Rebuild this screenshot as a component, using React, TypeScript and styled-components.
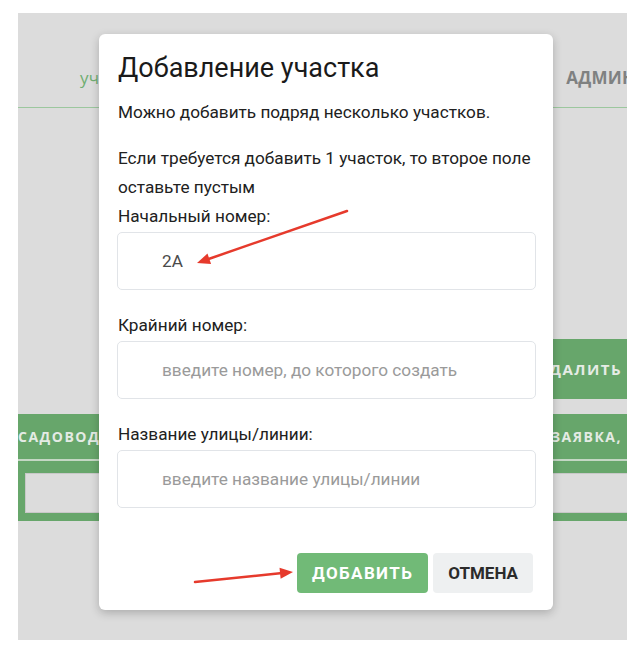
import * as React from "react";
import styled, { createGlobalStyle } from "styled-components";

const GlobalStyle = createGlobalStyle`
  html, body {
    margin: 0;
    padding: 0;
    background: #ffffff;
  }
  * {
    box-sizing: border-box;
  }
`;

const Page = styled.div`
  position: relative;
  width: 642px;
  height: 658px;
  padding: 13px 0 0 18px;
`;

const Screen = styled.div`
  position: relative;
  width: 609px;
  height: 627px;
  background: #dcdcdc;
  overflow: hidden;
  font-family: "Open Sans", "Liberation Sans", sans-serif;
`;

const Nav = styled.nav`
  display: flex;
  align-items: center;
  height: 95px;
  padding-top: 34px;
  border-bottom: 1px solid #9cc79e;
`;

const NavDivider = styled.span`
  width: 1px;
  height: 24px;
  margin-left: 28px;
  background: #cfcfcf;
`;

const NavItem = styled.span<{ $active?: boolean; $offset: number }>`
  margin-left: ${(p) => p.$offset}px;
  font-size: 17px;
  font-weight: ${(p) => (p.$active ? 400 : 700)};
  color: ${(p) => (p.$active ? "#6fae72" : "#7f8181")};
  white-space: nowrap;
  letter-spacing: 0.3px;
`;

const Toolbar = styled.div`
  display: flex;
  margin-top: 231px;
  padding-left: 506px;
`;

const GreenButton = styled.div`
  height: 60px;
  padding: 0 14px;
  display: flex;
  align-items: center;
  background: #67a66b;
  color: #e6ece6;
  font-weight: 700;
  font-size: 15px;
  letter-spacing: 1.5px;
  white-space: nowrap;
`;

const TableHeader = styled.div`
  display: flex;
  align-items: center;
  height: 47px;
  margin-top: 15px;
  background: #67a66b;
  border-bottom: 2px solid #c4d7c4;
  white-space: nowrap;
`;

const HeaderCell = styled.span<{ $width: number }>`
  flex: 0 0 ${(p) => p.$width}px;
  color: #e4ebe4;
  font-size: 14px;
  font-weight: 700;
  letter-spacing: 1.5px;
`;

const FilterRow = styled.div`
  height: 60px;
  padding: 12px 0 8px 7px;
  background: #67a66b;
`;

const FilterInput = styled.div`
  height: 40px;
  width: 640px;
  background: #dcdcdc;
  border: 1px solid #c8c8c8;
`;

const Modal = styled.div`
  position: absolute;
  left: 81px;
  top: 21px;
  width: 454px;
  padding: 17px 17px 17px 19px;
  background: #ffffff;
  border-radius: 6px;
  box-shadow: 0 3px 10px rgba(0, 0, 0, 0.22);
  font-family: Roboto, "Noto Sans", sans-serif;
  color: #212121;
`;

const Title = styled.h2`
  margin: 0 0 13px;
  font-size: 27px;
  line-height: 34px;
  font-weight: 400;
  color: #1a1a1a;
`;

const Text = styled.p<{ $gap: number }>`
  margin: 0 0 ${(p) => p.$gap}px;
  font-size: 17.2px;
  line-height: 29px;
`;

const Field = styled.div`
  margin-bottom: 23px;
`;

const Label = styled.label`
  display: block;
  font-size: 17.2px;
  line-height: 24px;
  margin-bottom: 4px;
`;

const Input = styled.input`
  display: block;
  width: 419px;
  height: 58px;
  margin-left: -1px;
  padding: 0 0 0 44px;
  border: 1px solid #e1e4e8;
  border-radius: 5px;
  font-family: Roboto, "Noto Sans", sans-serif;
  font-size: 17.2px;
  color: #4a4a4a;
  outline: none;

  &::placeholder {
    color: #9a9a9a;
  }
`;

const Footer = styled.div`
  display: flex;
  justify-content: flex-end;
  gap: 5px;
  margin-top: 45px;
  padding-right: 3px;
`;

const ModalButton = styled.button<{ $primary?: boolean }>`
  height: 40px;
  padding: 0 15px;
  border: 0;
  border-radius: 4px;
  background: ${(p) => (p.$primary ? "#71ba77" : "#eef0f1")};
  color: ${(p) => (p.$primary ? "#ffffff" : "#2b2b2b")};
  font-family: Roboto, "Noto Sans", sans-serif;
  font-size: 17px;
  font-weight: 700;
  letter-spacing: ${(p) => (p.$primary ? 1.4 : 0)}px;
  text-transform: uppercase;
`;

const Annotations = styled.svg`
  position: absolute;
  left: 0;
  top: 0;
  pointer-events: none;
`;

const Arrow = ({ x1, y1, x2, y2 }: { x1: number; y1: number; x2: number; y2: number }) => {
  const a = Math.atan2(y2 - y1, x2 - x1);
  const len = 13;
  const w = 5.5;
  const bx = x2 - Math.cos(a) * len;
  const by = y2 - Math.sin(a) * len;
  const px = -Math.sin(a) * w;
  const py = Math.cos(a) * w;
  return (
    <g>
      <line x1={x1} y1={y1} x2={bx} y2={by} stroke="#e63a2c" strokeWidth={2.5} strokeLinecap="round" />
      <polygon points={`${x2},${y2} ${bx + px},${by + py} ${bx - px},${by - py}`} fill="#e63a2c" />
    </g>
  );
};

export default function App() {
  return (
    <Page>
      <GlobalStyle />
      <Screen>
        <Nav>
          <NavDivider />
          <NavItem $active $offset={34}>участки</NavItem>
          <NavItem $offset={420}>АДМИНИСТРИРОВАНИЕ</NavItem>
        </Nav>
        <Toolbar>
          <GreenButton>УДАЛИТЬ</GreenButton>
        </Toolbar>
        <TableHeader>
          <HeaderCell $width={533}>САДОВОД</HeaderCell>
          <HeaderCell $width={200}>ЗАЯВКА, СТАТУС</HeaderCell>
        </TableHeader>
        <FilterRow>
          <FilterInput />
        </FilterRow>

        <Modal>
          <Title>Добавление участка</Title>
          <Text $gap={17}>Можно добавить подряд несколько участков.</Text>
          <Text $gap={2}>
            Если требуется добавить 1 участок, то второе поле оставьте пустым
          </Text>
          <Field>
            <Label>Начальный номер:</Label>
            <Input defaultValue="2А" />
          </Field>
          <Field>
            <Label>Крайний номер:</Label>
            <Input placeholder="введите номер, до которого создать" />
          </Field>
          <Field>
            <Label>Название улицы/линии:</Label>
            <Input placeholder="введите название улицы/линии" />
          </Field>
          <Footer>
            <ModalButton $primary>Добавить</ModalButton>
            <ModalButton>Отмена</ModalButton>
          </Footer>
        </Modal>
      </Screen>
      <Annotations width={642} height={658} viewBox="0 0 642 658">
        <Arrow x1={347} y1={211} x2={197} y2={263} />
        <Arrow x1={195} y1={582} x2={293} y2={572} />
      </Annotations>
    </Page>
  );
}
